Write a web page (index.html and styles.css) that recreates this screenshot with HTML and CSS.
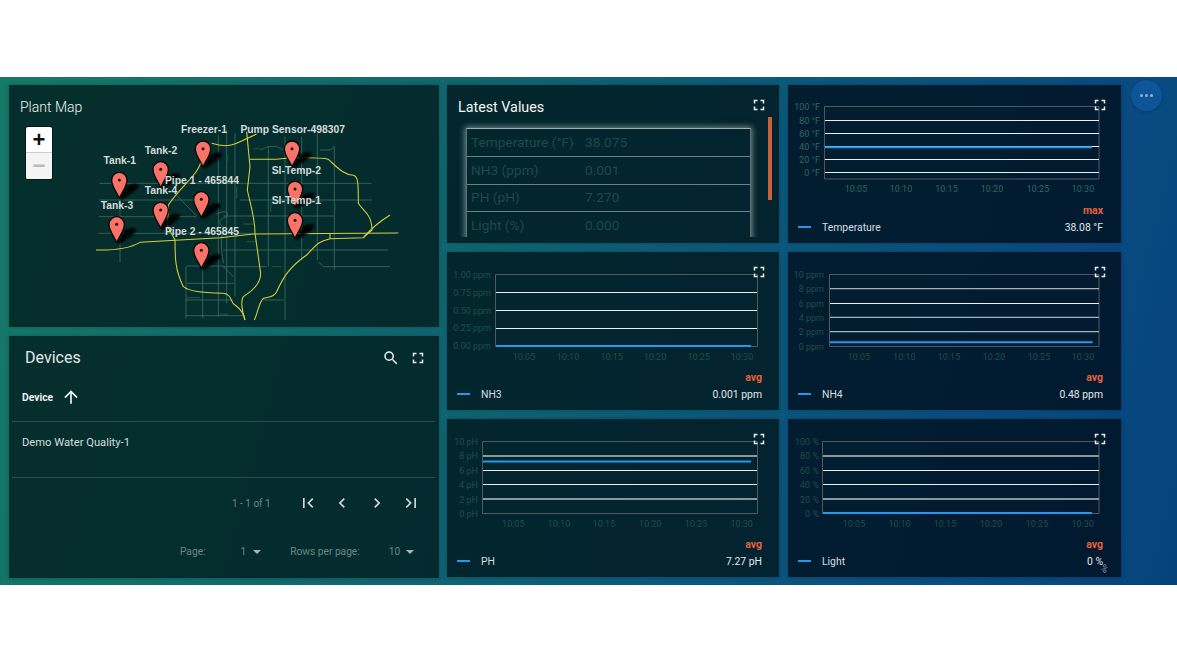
FILE: index.html
```html
<!DOCTYPE html>
<html lang="en">
<head>
<meta charset="utf-8">
<title>Water Quality Dashboard</title>
<link rel="stylesheet" href="styles.css">
</head>
<body>
<main class="dash">
  <div class="col-left">
    <section class="card card-left map-card">
      <h2 class="title title-map">Plant Map</h2>
      <div class="zoom"><div class="zoom-in">+</div><div class="zoom-out">−</div></div>
      <svg class="map" viewBox="27 45 1290 726" width="430" height="242">
        <defs>
          <filter id="blur" x="-30%" y="-30%" width="160%" height="160%"><feGaussianBlur stdDeviation="3"/></filter>
          <g id="pin">
            <path class="pin-shadow" d="M0 57 L22 20 C36 8 62 8 58 20 C50 34 28 44 8 60 Z" filter="url(#blur)"/>
            <path class="pin-body" d="M0 56 C-4 40 -23 22 -23 0 A23 23 0 0 1 23 0 C23 22 4 40 0 56 Z"/>
            <circle class="pin-dot" r="4.5"/>
          </g>
        </defs>
        <g class="roads-minor">
          <path d="M298 340H1115M298 390H590M720 390H1115M296 440H590M670 438H1003M296 490H760M670 540H1165M560 588H670M670 590H800M955 575L970 590H1170M560 640H700M556 690H700M558 737H735"/>
          <path d="M360 340V578M558 590V745M608 570V745M655 195V740M680 180V700M705 190V680M805 230V590M855 200V750M905 200V570M952 190V570M1003 230V600"/>
          <path d="M520 365L590 438M650 432C670 420 690 425 680 440C660 445 650 460 670 470C665 500 660 520 670 580M780 240C810 225 830 225 850 240M960 240H985C1000 240 1000 228 1003 228M670 590L700 620M790 690H850"/>
        </g>
        <g class="roads-green">
          <path d="M682 255V275M710 350V385M812 395V425M1005 400V420M730 462H760M740 515H770M815 540H840M815 590H845M560 683H600M660 733H685M760 236H778M620 590H640"/>
        </g>
        <g class="roads-major">
          <path d="M288 540C340 541 385 538 420 517L660 503L760 492L1195 489"/>
          <path d="M635 220C660 228 690 230 710 220L770 192"/>
          <path d="M740 185L750 290L742 360C750 400 765 440 765 490L782 610C782 640 760 660 730 680C722 690 725 720 735 750"/>
          <path d="M750 268H830C880 262 960 262 985 268C1010 290 1030 315 1060 316C1075 320 1075 340 1075 400C1090 425 1115 430 1116 480L1090 503"/>
          <path d="M1170 435C1130 460 1110 480 1090 503L990 506C950 515 945 530 920 555C870 590 850 620 830 665C820 685 800 680 790 685C775 700 775 725 763 750"/>
          <path d="M603 270C600 310 550 340 505 405L503 470L525 510C525 560 525 600 550 650C570 665 600 667 670 670C700 675 690 700 705 705C725 720 730 730 735 750"/>
          <path d="M990 490V506"/>
        </g>
        <use href="#pin" x="358" y="330"/>
        <use href="#pin" x="482" y="298"/>
        <use href="#pin" x="609" y="236"/>
        <use href="#pin" x="876" y="236"/>
        <use href="#pin" x="885" y="357"/>
        <use href="#pin" x="885" y="451"/>
        <use href="#pin" x="604" y="388"/>
        <use href="#pin" x="482" y="420"/>
        <use href="#pin" x="350" y="463"/>
        <use href="#pin" x="604" y="541"/>
        <g class="map-labels">
          <text x="359" y="281">Tank-1</text>
          <text x="483" y="253">Tank-2</text>
          <text x="612" y="188">Freezer-1</text>
          <text x="878" y="188">Pump Sensor-498307</text>
          <text x="889" y="311">SI-Temp-2</text>
          <text x="889" y="403">SI-Temp-1</text>
          <text x="606" y="341">Pipe 1 - 465844</text>
          <text x="483" y="372">Tank-4</text>
          <text x="351" y="416">Tank-3</text>
          <text x="606" y="494">Pipe 2 - 465845</text>
        </g>
      </svg>
    </section>
    <section class="card card-left devices">
      <header class="dev-head">
        <h2 class="title title-dev">Devices</h2>
        <div class="dev-tools">
          <svg class="ico-18" viewBox="0 0 24 24"><path d="M15.5 14h-.79l-.28-.27A6.47 6.47 0 0 0 16 9.5 6.5 6.5 0 1 0 9.5 16c1.61 0 3.09-.59 4.23-1.57l.27.28v.79l5 4.99L20.49 19l-4.99-5zm-6 0C7.01 14 5 11.99 5 9.5S7.01 5 9.5 5 14 7.01 14 9.5 11.99 14 9.5 14z"/></svg>
          <svg class="ico-18" viewBox="0 0 24 24"><path d="M7 14H5v5h5v-2H7v-3zm-2-4h2V7h3V5H5v5zm12 7h-3v2h5v-5h-2v3zM14 5v2h3v3h2V5h-5z"/></svg>
        </div>
      </header>
      <div class="dev-sort">
        <span class="dev-col">Device</span>
        <svg class="ico-20" viewBox="0 0 24 24"><path d="M4 12l1.41 1.41L11 7.83V20h2V7.83l5.58 5.59L20 12l-8-8-8 8z"/></svg>
      </div>
      <div class="dev-row">Demo Water Quality-1</div>
      <div class="pager">
        <span class="pager-range">1 - 1 of 1</span>
        <svg class="ico-nav" viewBox="0 0 24 24"><path d="M18.41 16.59L13.82 12l4.59-4.59L17 6l-6 6 6 6zM6 6h2v12H6z"/></svg>
        <svg class="ico-nav" viewBox="0 0 24 24"><path d="M15.41 7.41L14 6l-6 6 6 6 1.41-1.41L10.83 12z"/></svg>
        <svg class="ico-nav" viewBox="0 0 24 24"><path d="M10 6L8.59 7.41 13.17 12l-4.58 4.59L10 18l6-6z"/></svg>
        <svg class="ico-nav" viewBox="0 0 24 24"><path d="M5.59 7.41L10.18 12l-4.59 4.59L7 18l6-6-6-6zM16 6h2v12h-2z"/></svg>
      </div>
      <div class="pager-select">
        <span class="sel-label">Page:</span>
        <span class="sel-val sel-page">1</span><i class="caret"></i>
        <span class="sel-label sel-rows">Rows per page:</span>
        <span class="sel-val sel-size">10</span><i class="caret caret-size"></i>
      </div>
    </section>
  </div>
  <div class="col-right">
    <section class="card card-mid latest">
      <h2 class="title title-latest">Latest Values</h2>
      <svg class="ico-18 fs fs-latest" viewBox="0 0 24 24"><path d="M7 14H5v5h5v-2H7v-3zm-2-4h2V7h3V5H5v5zm12 7h-3v2h5v-5h-2v3zM14 5v2h3v3h2V5h-5z"/></svg>
      <div class="scrollbar"></div>
      <div class="values-clip">
        <div class="values-wrap">
          <table class="values">
            <tr><td class="v-name">Temperature (°F)</td><td>38.075</td></tr>
            <tr><td class="v-name">NH3 (ppm)</td><td>0.001</td></tr>
            <tr><td class="v-name">PH (pH)</td><td>7.270</td></tr>
            <tr><td class="v-name">Light (%)</td><td>0.000</td></tr>
          </table>
        </div>
      </div>
    </section>

    <section class="card card-far chart">
      <svg class="ico-18 fs" viewBox="0 0 24 24"><path d="M7 14H5v5h5v-2H7v-3zm-2-4h2V7h3V5H5v5zm12 7h-3v2h5v-5h-2v3zM14 5v2h3v3h2V5h-5z"/></svg>
      <svg class="plot" width="333" height="115" viewBox="0 0 333 115">
        <path class="frame" d="M36.500 21.500H311V94H36.500Z"/>
        <path class="grid" d="M37 35.500H311M37 48.500H311M37 61.500H311M37 74.500H311M37 87.500H311"/>
        <path class="line" d="M37 62.300H304"/>
        <g class="yl yl-bright"><text x="32" y="25">100 °F</text><text x="32" y="38.500">80 °F</text><text x="32" y="51.500">60 °F</text><text x="32" y="64.500">40 °F</text><text x="32" y="77.500">20 °F</text><text x="32" y="90.500">0 °F</text></g>
        <g class="xl xl-bright"><text x="68" y="107">10:05</text><text x="113" y="107">10:10</text><text x="158.500" y="107">10:15</text><text x="204" y="107">10:20</text><text x="250" y="107">10:25</text><text x="295" y="107">10:30</text></g>
      </svg>
      <div class="agg">max</div>
      <div class="legend"><i class="dash-mark"></i><span class="l-name">Temperature</span><span class="l-val">38.08 °F</span></div>
    </section>

    <section class="card card-mid chart">
      <svg class="ico-18 fs fs-latest" viewBox="0 0 24 24"><path d="M7 14H5v5h5v-2H7v-3zm-2-4h2V7h3V5H5v5zm12 7h-3v2h5v-5h-2v3zM14 5v2h3v3h2V5h-5z"/></svg>
      <svg class="plot" width="333" height="115" viewBox="0 0 333 115">
        <path class="frame" d="M48.500 22.500H310.500V94.500H48.500Z"/>
        <path class="grid" d="M49 40.500H310M49 58.500H310M49 76.500H310"/>
        <path class="line" d="M49 94H304"/>
        <g class="yl"><text x="44" y="25.500">1.00 ppm</text><text x="44" y="43.500">0.75 ppm</text><text x="44" y="61.500">0.50 ppm</text><text x="44" y="79">0.25 ppm</text><text x="44" y="97">0.00 ppm</text></g>
        <g class="xl"><text x="77" y="108">10:05</text><text x="121" y="108">10:10</text><text x="164.700" y="108">10:15</text><text x="208" y="108">10:20</text><text x="251.700" y="108">10:25</text><text x="295" y="108">10:30</text></g>
      </svg>
      <div class="agg">avg</div>
      <div class="legend"><i class="dash-mark"></i><span class="l-name">NH3</span><span class="l-val">0.001 ppm</span></div>
    </section>

    <section class="card card-far chart">
      <svg class="ico-18 fs" viewBox="0 0 24 24"><path d="M7 14H5v5h5v-2H7v-3zm-2-4h2V7h3V5H5v5zm12 7h-3v2h5v-5h-2v3zM14 5v2h3v3h2V5h-5z"/></svg>
      <svg class="plot" width="333" height="115" viewBox="0 0 333 115">
        <path class="frame" d="M41.500 22.500H311V94.500H41.500Z"/>
        <path class="grid grid-mid" d="M42 36.700H311M42 65.300H311M42 79.700H311"/>
        <path class="grid" d="M42 51.500H311"/>
        <path class="line" d="M42 90.300H304.700"/>
        <g class="yl"><text x="36" y="25.500">10 ppm</text><text x="36" y="39.500">8 ppm</text><text x="36" y="54.500">6 ppm</text><text x="36" y="68.500">4 ppm</text><text x="36" y="83">2 ppm</text><text x="36" y="97.500">0 ppm</text></g>
        <g class="xl"><text x="71" y="108">10:05</text><text x="116.300" y="108">10:10</text><text x="161" y="108">10:15</text><text x="206" y="108">10:20</text><text x="251" y="108">10:25</text><text x="295" y="108">10:30</text></g>
      </svg>
      <div class="agg">avg</div>
      <div class="legend"><i class="dash-mark"></i><span class="l-name">NH4</span><span class="l-val">0.48 ppm</span></div>
    </section>

    <section class="card card-mid chart">
      <svg class="ico-18 fs fs-latest" viewBox="0 0 24 24"><path d="M7 14H5v5h5v-2H7v-3zm-2-4h2V7h3V5H5v5zm12 7h-3v2h5v-5h-2v3zM14 5v2h3v3h2V5h-5z"/></svg>
      <svg class="plot" width="333" height="115" viewBox="0 0 333 115">
        <path class="frame" d="M35.500 22.500H310.500V94.500H35.500Z"/>
        <path class="grid grid-soft" d="M36 37H310M36 80H310"/>
        <path class="grid" d="M36 51.500H310M36 65.500H310"/>
        <path class="line" d="M36 42.500H304"/>
        <g class="yl"><text x="31" y="25.500">10 pH</text><text x="31" y="40">8 pH</text><text x="31" y="55">6 pH</text><text x="31" y="69">4 pH</text><text x="31" y="84">2 pH</text><text x="31" y="98">0 pH</text></g>
        <g class="xl"><text x="66.300" y="108">10:05</text><text x="112" y="108">10:10</text><text x="157" y="108">10:15</text><text x="203.300" y="108">10:20</text><text x="249" y="108">10:25</text><text x="294.700" y="108">10:30</text></g>
      </svg>
      <div class="agg">avg</div>
      <div class="legend"><i class="dash-mark"></i><span class="l-name">PH</span><span class="l-val">7.27 pH</span></div>
    </section>

    <section class="card card-far chart">
      <svg class="ico-18 fs" viewBox="0 0 24 24"><path d="M7 14H5v5h5v-2H7v-3zm-2-4h2V7h3V5H5v5zm12 7h-3v2h5v-5h-2v3zM14 5v2h3v3h2V5h-5z"/></svg>
      <svg class="plot" width="333" height="115" viewBox="0 0 333 115">
        <path class="frame" d="M34.500 22.500H311V94.500H34.500Z"/>
        <path class="grid grid-soft" d="M35 37H311M35 80H311"/>
        <path class="grid" d="M35 51.500H311M35 65.500H311"/>
        <path class="line" d="M35 94H304"/>
        <g class="yl"><text x="31" y="25.500">100 %</text><text x="31" y="40">80 %</text><text x="31" y="55">60 %</text><text x="31" y="69">40 %</text><text x="31" y="84">20 %</text><text x="31" y="98">0 %</text></g>
        <g class="xl"><text x="66" y="108">10:05</text><text x="111.700" y="108">10:10</text><text x="157" y="108">10:15</text><text x="203" y="108">10:20</text><text x="249" y="108">10:25</text><text x="294.700" y="108">10:30</text></g>
      </svg>
      <div class="agg">avg</div>
      <div class="legend"><i class="dash-mark"></i><span class="l-name">Light</span><span class="l-val">0 %</span></div>
      <span class="stray">%</span>
    </section>
  </div>
  <button class="fab" type="button"><i></i><i></i><i></i></button>
</main>
</body>
</html>
```

FILE: styles.css
```css
* { box-sizing: border-box; }
html, body { margin: 0; height: 100%; background: #fff; }
body { padding-top: 77px; font-family: Roboto, "Liberation Sans", sans-serif; overflow: hidden; }
.dash {
  position: relative;
  width: 1177px;
  height: 508px;
  padding: 8px 0 7px 9px;
  display: flex;
  gap: 8px;
  background: linear-gradient(105deg, #167a69 0%, #10686f 36%, #0b5a7c 60%, #094c82 85%, #06437c 100%);
}
.card {
  position: relative;
  box-shadow: 0 0 5px rgba(0, 0, 0, .22);
  color: #e6eceb;
}
.card-left { background: rgba(1, 29, 30, .8); }
.card-mid { background: rgba(1, 24, 30, .82); }
.card-far { background: rgba(1, 18, 33, .84); }
.col-left { width: 430px; display: flex; flex-direction: column; gap: 9px; }
.col-right { display: grid; grid-template-columns: 332px 333px; grid-template-rows: 158px 158px 158px; column-gap: 9px; row-gap: 9px; }
.title { margin: 0; font-weight: 400; }

/* map */
.map-card { height: 242px; overflow: hidden; }
.title-map { position: absolute; left: 11px; top: 13px; font-size: 14px; line-height: 18px; font-weight: 300; color: #f0f4f3; }
.map { display: block; }
.zoom { position: absolute; left: 17px; top: 42px; width: 26px; background: #fff; border-radius: 2px; box-shadow: 0 0 0 1px rgba(0,0,0,.45); }
.zoom-in, .zoom-out { height: 26px; display: flex; align-items: center; justify-content: center; font: 700 22px "Liberation Sans", sans-serif; }
.zoom-in { color: #111; border-bottom: 1px solid #ccc; }
.zoom-out { color: #bbb; background: #f4f4f4; border-radius: 0 0 2px 2px; }
.roads-minor path { fill: none; stroke: #3f6e60; stroke-width: 2.4; }
.roads-green path { fill: none; stroke: #14552f; stroke-width: 4; }
.roads-major path { fill: none; stroke: #d8cf3c; stroke-width: 3.2; }
.pin-shadow { fill: #000; opacity: .9; }
.pin-body { fill: #fb7268; stroke: #0a0a0a; stroke-width: 4; }
.pin-dot { fill: #111; }
.map-labels text { font: 700 31px "Liberation Sans", sans-serif; fill: #d4dcda; text-anchor: middle; }

/* devices */
.devices { height: 242px; }
.dev-head { display: flex; align-items: center; justify-content: space-between; padding: 6px 12px 0 16px; height: 37px; }
.title-dev { font-size: 16px; line-height: 24px; color: #e0e8e7; }
.dev-tools { display: flex; align-items: center; gap: 9.500px; }
.ico-18 { width: 18px; height: 18px; fill: #e8eeee; display: block; }
.ico-20 { width: 20px; height: 20px; fill: #f0f4f4; }
.dev-sort { margin: 0 4px 0 3px; padding: 0 0 0 10px; height: 49px; display: flex; align-items: center; gap: 7.500px; border-bottom: 1px solid #28504f; }
.dev-col { font-size: 10.300px; font-weight: 700; color: #eef3f3; }
.dev-row { margin: 0 4px 0 3px; padding-left: 10px; height: 56px; line-height: 41px; font-size: 11.200px; color: #d5dede; border-bottom: 1px solid #28504f; }
.pager { display: flex; align-items: center; justify-content: flex-end; height: 50px; padding-right: 18px; gap: 14.330px; font-size: 10px; color: #6d8886; }
.pager-range { margin-right: 13px; }
.ico-nav { width: 20px; height: 20px; fill: #cfd8d8; }
.pager-select { display: flex; align-items: center; height: 47px; font-size: 10.200px; color: #6d8886; padding-left: 171px; }
.sel-label { white-space: nowrap; }
.sel-page { margin-left: 35px; }
.sel-rows { margin-left: 29px; }
.sel-size { margin-left: 29px; }
.caret { width: 0; height: 0; margin-left: 7px; border-left: 4px solid transparent; border-right: 4px solid transparent; border-top: 4px solid #a9b6b6; }
.caret-size { margin-left: 6px; }

/* latest */
.title-latest { position: absolute; left: 11px; top: 13px; font-size: 14.300px; line-height: 18px; color: #f2f6f6; }
.fs { position: absolute; right: 12px; top: 11px; }
.fs-latest { right: 11px; }
.scrollbar { position: absolute; left: 321px; top: 32px; width: 4px; height: 83px; background: #c9623a; }
.values-clip { position: absolute; left: 8px; top: 30px; width: 307px; height: 122px; overflow: hidden; padding: 13px 11px 0; }
.values-wrap { width: 285px; height: 160px; border-left: 1px solid #5a7678; border-right: 1px solid #5a7678; border-top: 1px solid #9db0b0; box-shadow: 0 0 6px 1px rgba(215, 228, 228, .55); }
.values { width: 100%; table-layout: fixed; border-collapse: collapse; font-size: 13.700px; color: #1d4a4b; }
.values td { height: 27.600px; padding: 0 0 1px 4px; border-bottom: 1px solid #66828a; white-space: nowrap; }
.v-name { width: 114px; }

/* charts */
.plot { display: block; }
.frame { fill: none; stroke: #53595b; stroke-width: 1; }
.grid { fill: none; stroke: #eaeeee; stroke-width: 1; }
.grid-mid { stroke: #a9b2b4; stroke-width: 1.200; }
.grid-soft { stroke: #8b9698; stroke-width: 2; }
.line { fill: none; stroke: #1f9bf0; stroke-width: 2; }
.yl text { font-size: 9px; fill: #1d4f4b; text-anchor: end; }
.xl text { font-size: 9px; fill: #1d4f4b; text-anchor: middle; }
.yl-bright text, .xl-bright text { fill: #2a6a63; }
.agg { margin-top: 4px; height: 13px; padding-right: 17px; text-align: right; font-size: 10.500px; line-height: 14px; font-weight: 700; color: #e8603a; }
.legend { display: flex; align-items: center; height: 20px; padding: 0 17px 0 10px; font-size: 10.400px; }
.card-far .agg { padding-right: 18px; }
.card-far .legend { padding-right: 18px; }
.dash-mark { width: 13px; height: 2.500px; background: #1f9bf0; margin-right: 11px; }
.l-name { flex: 1; color: #d5dfe0; }
.l-val { color: #e0e8e9; }
.stray { position: absolute; left: 313px; top: 144px; font-size: 10px; color: #8da3ad; transform: rotate(40deg); }

.fab { position: absolute; left: 1131px; top: 2.500px; width: 31px; height: 31px; border: 0; border-radius: 50%; padding: 0; background: #0d5596; display: flex; align-items: center; justify-content: center; gap: 2px; box-shadow: 0 1px 3px rgba(0,0,0,.2); }
.fab i { width: 3px; height: 3px; border-radius: 50%; background: #93b3cf; }
```
